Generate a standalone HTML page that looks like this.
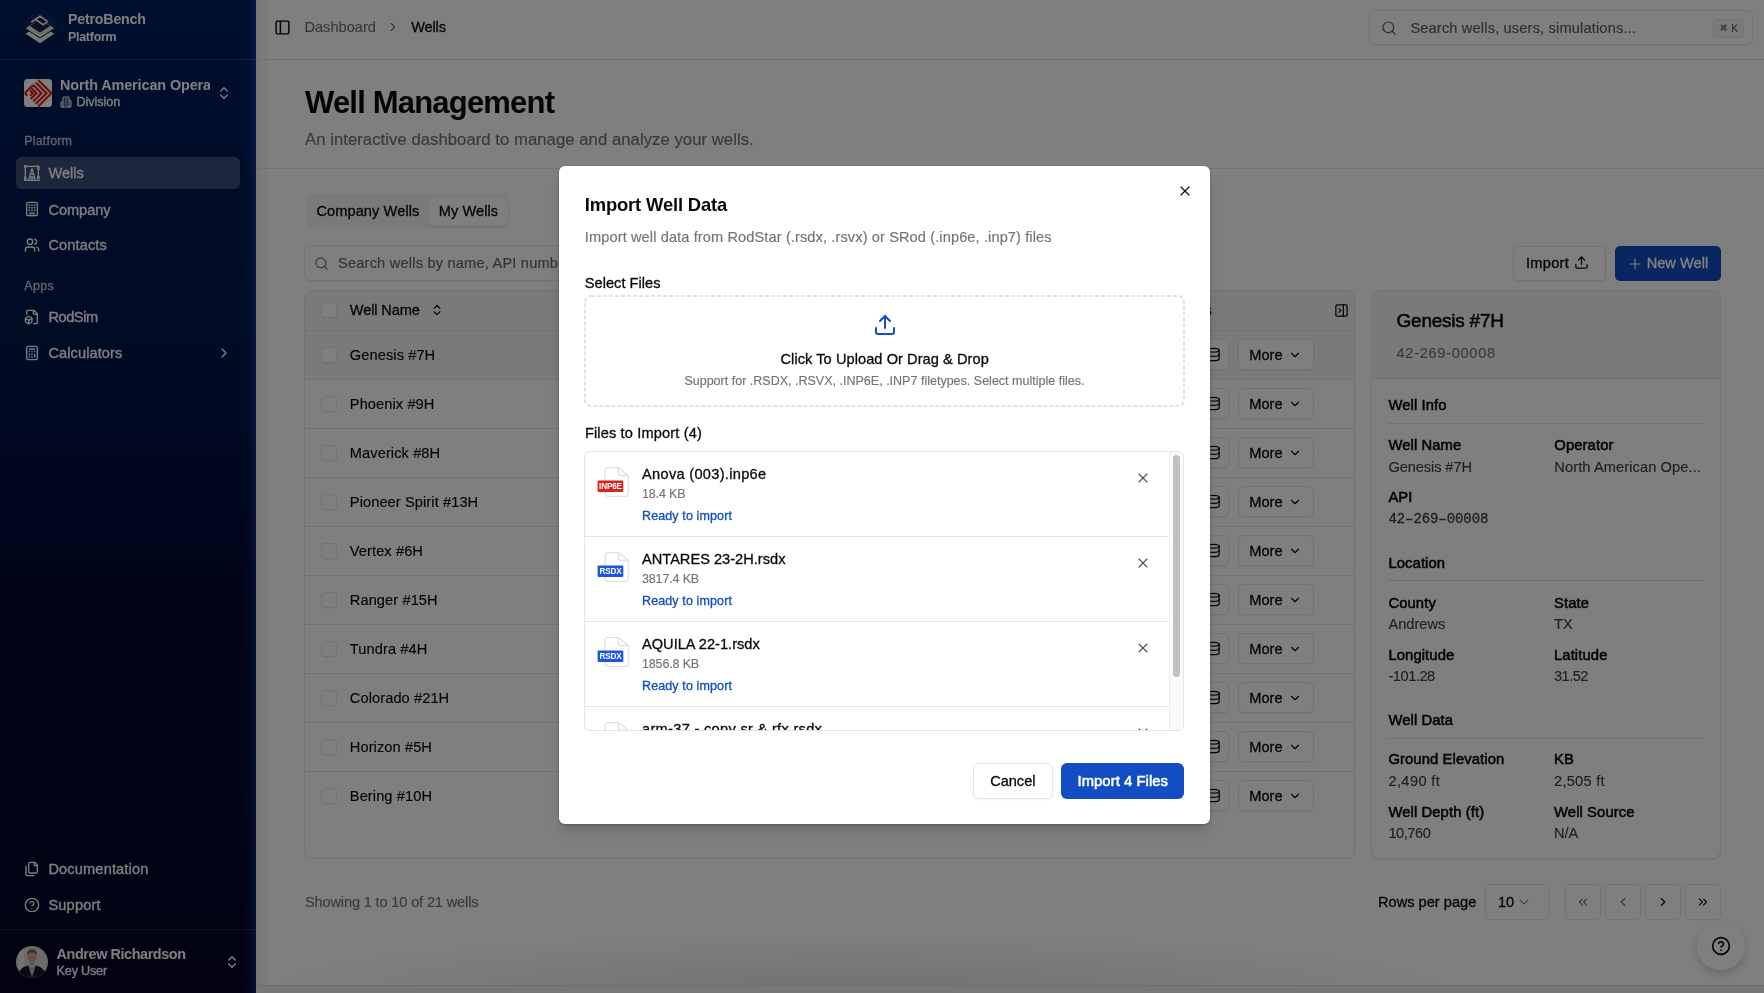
<!DOCTYPE html><html><head><meta charset="utf-8"><title>Import Well Data</title><style>*{box-sizing:content-box}
body{margin:0;width:1764px;height:993px;overflow:hidden;position:relative;background:#fff;font-family:'Liberation Sans',sans-serif}
.t{position:absolute;white-space:nowrap;line-height:1}
.a{position:absolute;display:block}
#ov{position:absolute;left:0;top:0;width:1764px;height:993px;background:rgba(0,0,0,.5)}
</style></head><body><div id="page" style="position:absolute;left:0;top:0;width:1764px;height:993px;overflow:hidden;will-change:transform"><div class="a" style="left:0px;top:0px;width:256px;height:993px;background:linear-gradient(180deg,#001e5c 0%,#001a54 12%,#001444 43%,#000c38 52%,#020830 60%,#02082c 80%,#040424 100%);"></div>
<div class="a" style="left:240px;top:0px;width:16px;height:993px;background:linear-gradient(90deg,rgba(30,70,190,0) 0%,rgba(30,70,190,0.10) 60%,rgba(40,90,220,0.35) 100%);"></div>
<div class="a" style="left:0px;top:59px;width:256px;height:1px;background:rgba(255,255,255,0.12);"></div>
<div class="a" style="left:0px;top:929px;width:256px;height:1px;background:rgba(255,255,255,0.12);"></div>
<svg class="a" style="left:18px;top:4px" width="44" height="46" viewBox="0 0 44 46"><defs><radialGradient id="lg" cx="50%" cy="50%" r="50%"><stop offset="0" stop-color="#3a5fae" stop-opacity=".6"/><stop offset=".6" stop-color="#2c4f9a" stop-opacity=".25"/><stop offset="1" stop-color="#2c4f9a" stop-opacity="0"/></radialGradient></defs><ellipse cx="22" cy="21" rx="19" ry="17" fill="url(#lg)"/><path d="M6.9 29.8 L22 20.2 L37 29.8 L22 39.8Z" fill="#f0f0f0" stroke="#06122e" stroke-width="0.9"/><path d="M6.9 24.2 L22 14.6 L37 24.2 L22 34Z" fill="#dedede" stroke="#06122e" stroke-width="0.9"/><path d="M12.8 22 L22 15.6 L31.2 22 L22 28.2Z" fill="#19233f" stroke="#06122e" stroke-width="0.8"/><path d="M17.6 15.2 L22 12.1 L29.6 17.6 L25.2 20.7 Z" fill="#0e1630" stroke="#ececec" stroke-width="1.7" stroke-linejoin="round"/><path d="M17.6 15.2 L13.9 17.8" stroke="#ececec" stroke-width="1.7" stroke-linecap="round"/></svg>
<div class="t" style="left:68.00px;top:12px;font-size:14.2px;font-weight:700;font-family:'Liberation Sans',sans-serif;color:#ffffff;letter-spacing:-0.189px;">PetroBench</div>
<div class="t" style="left:68.00px;top:31px;font-size:12.4px;font-weight:700;font-family:'Liberation Sans',sans-serif;color:#ffffff;letter-spacing:-0.243px;">Platform</div>
<svg class="a" style="left:24px;top:79px" width="28" height="28" viewBox="0 0 28 28"><rect x="0" y="0" width="28" height="28" rx="3.5" fill="#ffffff"/><g stroke="#e01a12" stroke-width="2.1" fill="none" stroke-linecap="butt" stroke-linejoin="miter"><path d="M14.2 0.9 L27.4 14.2 L14.2 27.5"/><path d="M11.7 3.4 L22.5 14.2 L11.7 25"/><path d="M9.2 5.9 L17.5 14.2 L9.2 22.5"/><path d="M0.8 14.2 L9.2 5.9"/><path d="M6.7 8.4 L12.5 14.2 L6.7 20"/><path d="M6.2 11.6 L8.8 14.2 L6.2 16.8"/><path d="M0.8 14.2 L3.3 16.7"/></g></svg>
<div class="a" style="left:60px;top:74px;width:150px;height:22px;overflow:hidden"><div class="t" style="left:0.00px;top:4px;font-size:14.4px;font-weight:700;font-family:'Liberation Sans',sans-serif;color:#ffffff;letter-spacing:-0.100px;">North American Operations</div></div>
<svg class="a" style="left:60px;top:96px;color:#ffffff;" width="12" height="12" viewBox="0 0 24 24" fill="none" stroke="currentColor" stroke-width="2.2" stroke-linecap="round" stroke-linejoin="round"><path d="M6 22V4a2 2 0 0 1 2-2h8a2 2 0 0 1 2 2v18Z"/><path d="M6 12H4a2 2 0 0 0-2 2v6a2 2 0 0 0 2 2h2"/><path d="M18 9h2a2 2 0 0 1 2 2v9a2 2 0 0 1-2 2h-2"/><path d="M10 6h4"/><path d="M10 10h4"/><path d="M10 14h4"/><path d="M10 18h4"/></svg>
<div class="t" style="left:76.50px;top:96px;font-size:12.6px;font-weight:400;font-family:'Liberation Sans',sans-serif;color:#ffffff;letter-spacing:-0.057px;-webkit-text-stroke:0.3px #ffffff;">Division</div>
<svg class="a" style="left:216px;top:85px;color:#ffffff;" width="16" height="16" viewBox="0 0 24 24" fill="none" stroke="currentColor" stroke-width="2" stroke-linecap="round" stroke-linejoin="round"><path d="m7 15 5 5 5-5"/><path d="m7 9 5-5 5 5"/></svg>
<div class="t" style="left:24.30px;top:135px;font-size:12.5px;font-weight:400;font-family:'Liberation Sans',sans-serif;color:#c4c8da;letter-spacing:0.164px;-webkit-text-stroke:0.3px #c4c8da;">Platform</div>
<div class="a" style="left:16px;top:157px;width:224px;height:32px;background:rgba(255,255,255,0.23);border-radius:6px;"></div>
<svg class="a" style="left:24px;top:165px" width="16" height="16" viewBox="0 0 16 16" fill="none" stroke="#fff" stroke-width="1.25" stroke-linecap="round"><path d="M0.6 15.3H15.5M1.3 1.4H13.6M1.3 1.4V11.8M14.4 4.8V11"/><circle cx="1.3" cy="1.4" r="0.8"/><ellipse cx="14.4" cy="2.8" rx="0.9" ry="1.9"/><ellipse cx="1.3" cy="13.3" rx="0.9" ry="1.4"/><ellipse cx="14.4" cy="12.5" rx="0.9" ry="1.4"/><path d="M8 3.3L4.6 15.3M8 3.3L11.4 15.3M6.4 9H9.6"/><circle cx="8" cy="12.8" r="1.3"/></svg>
<div class="t" style="left:48.40px;top:166px;font-size:14.6px;font-weight:400;font-family:'Liberation Sans',sans-serif;color:#ffffff;letter-spacing:0.000px;-webkit-text-stroke:0.3px #ffffff;">Wells</div>
<svg class="a" style="left:24px;top:201px;color:#ffffff;" width="16" height="16" viewBox="0 0 24 24" fill="none" stroke="currentColor" stroke-width="2" stroke-linecap="round" stroke-linejoin="round"><rect width="16" height="20" x="4" y="2" rx="2"/><path d="M9 22v-4h6v4"/><g fill="currentColor" stroke="none"><rect x="6.8" y="4.8" width="2.4" height="2.4"/><rect x="10.8" y="4.8" width="2.4" height="2.4"/><rect x="14.8" y="4.8" width="2.4" height="2.4"/><rect x="6.8" y="8.8" width="2.4" height="2.4"/><rect x="10.8" y="8.8" width="2.4" height="2.4"/><rect x="14.8" y="8.8" width="2.4" height="2.4"/><rect x="6.8" y="12.8" width="2.4" height="2.4"/><rect x="10.8" y="12.8" width="2.4" height="2.4"/><rect x="14.8" y="12.8" width="2.4" height="2.4"/></g></svg>
<div class="t" style="left:48.40px;top:203px;font-size:14.6px;font-weight:400;font-family:'Liberation Sans',sans-serif;color:#ffffff;letter-spacing:-0.033px;-webkit-text-stroke:0.3px #ffffff;">Company</div>
<svg class="a" style="left:24px;top:237px;color:#ffffff;" width="16" height="16" viewBox="0 0 24 24" fill="none" stroke="currentColor" stroke-width="2" stroke-linecap="round" stroke-linejoin="round"><path d="M16 21v-2a4 4 0 0 0-4-4H6a4 4 0 0 0-4 4v2"/><circle cx="9" cy="7" r="4"/><path d="M22 21v-2a4 4 0 0 0-3-3.87"/><path d="M16 3.13a4 4 0 0 1 0 7.75"/></svg>
<div class="t" style="left:48.40px;top:238px;font-size:14.6px;font-weight:400;font-family:'Liberation Sans',sans-serif;color:#ffffff;letter-spacing:0.114px;-webkit-text-stroke:0.3px #ffffff;">Contacts</div>
<div class="t" style="left:24.30px;top:280px;font-size:12.5px;font-weight:400;font-family:'Liberation Sans',sans-serif;color:#c4c8da;letter-spacing:0.300px;-webkit-text-stroke:0.3px #c4c8da;">Apps</div>
<svg class="a" style="left:24px;top:309px;color:#ffffff;" width="16" height="16" viewBox="0 0 24 24" fill="none" stroke="currentColor" stroke-width="2" stroke-linecap="round" stroke-linejoin="round"><path d="M14.5 22H18a2 2 0 0 0 2-2V7l-5-5H6a2 2 0 0 0-2 2v4"/><path d="M14 2v4a2 2 0 0 0 2 2h4"/><path d="M3 13.1a2 2 0 0 0-1 1.76v3.24a2 2 0 0 0 .97 1.78L6 21.7a2 2 0 0 0 2.03.01L11 19.9a2 2 0 0 0 1-1.76V14.9a2 2 0 0 0-.97-1.78L8 11.3a2 2 0 0 0-2.03-.01Z"/><path d="M7 17v5"/><path d="M11.7 14.2 7 17l-4.7-2.8"/></svg>
<div class="t" style="left:48.40px;top:310px;font-size:14.6px;font-weight:400;font-family:'Liberation Sans',sans-serif;color:#ffffff;letter-spacing:-0.430px;-webkit-text-stroke:0.3px #ffffff;">RodSim</div>
<svg class="a" style="left:24px;top:345px;color:#ffffff;" width="16" height="16" viewBox="0 0 24 24" fill="none" stroke="currentColor" stroke-width="2" stroke-linecap="round" stroke-linejoin="round"><rect width="16" height="20" x="4" y="2" rx="2"/><line x1="8" x2="16" y1="6" y2="6"/><line x1="16" x2="16" y1="14" y2="18"/><g fill="currentColor" stroke="none"><rect x="6.9" y="8.9" width="2.2" height="2.2"/><rect x="10.9" y="8.9" width="2.2" height="2.2"/><rect x="14.9" y="8.9" width="2.2" height="2.2"/><rect x="6.9" y="12.9" width="2.2" height="2.2"/><rect x="10.9" y="12.9" width="2.2" height="2.2"/><rect x="6.9" y="16.9" width="2.2" height="2.2"/><rect x="10.9" y="16.9" width="2.2" height="2.2"/></g></svg>
<div class="t" style="left:48.40px;top:346px;font-size:14.6px;font-weight:400;font-family:'Liberation Sans',sans-serif;color:#ffffff;letter-spacing:0.085px;-webkit-text-stroke:0.3px #ffffff;">Calculators</div>
<svg class="a" style="left:216px;top:345px;color:#ffffff;" width="16" height="16" viewBox="0 0 24 24" fill="none" stroke="currentColor" stroke-width="2" stroke-linecap="round" stroke-linejoin="round"><path d="m9 18 6-6-6-6"/></svg>
<svg class="a" style="left:24px;top:861px;color:#ffffff;" width="16" height="16" viewBox="0 0 24 24" fill="none" stroke="currentColor" stroke-width="2" stroke-linecap="round" stroke-linejoin="round"><path d="M20 7h-3a2 2 0 0 1-2-2V2"/><path d="M9 18a2 2 0 0 1-2-2V4a2 2 0 0 1 2-2h7l4 4v10a2 2 0 0 1-2 2Z"/><path d="M3 7.6v12.8A1.6 1.6 0 0 0 4.6 22h9.8"/></svg>
<div class="t" style="left:48.40px;top:862px;font-size:14.6px;font-weight:400;font-family:'Liberation Sans',sans-serif;color:#ffffff;letter-spacing:0.150px;-webkit-text-stroke:0.3px #ffffff;">Documentation</div>
<svg class="a" style="left:24px;top:897px;color:#ffffff;" width="16" height="16" viewBox="0 0 24 24" fill="none" stroke="currentColor" stroke-width="2" stroke-linecap="round" stroke-linejoin="round"><circle cx="12" cy="12" r="10"/><path d="M9.09 9a3 3 0 0 1 5.83 1c0 2-3 3-3 3"/><path d="M12 17h.01"/></svg>
<div class="t" style="left:48.40px;top:898px;font-size:14.6px;font-weight:400;font-family:'Liberation Sans',sans-serif;color:#ffffff;letter-spacing:0.192px;-webkit-text-stroke:0.3px #ffffff;">Support</div>
<svg class="a" style="left:16px;top:946px" width="32" height="32" viewBox="0 0 32 32"><defs><clipPath id="av"><circle cx="16" cy="16" r="16"/></clipPath></defs><g clip-path="url(#av)"><rect width="32" height="32" fill="#d6d6d6"/><rect x="3" y="0" width="5" height="32" fill="#e6e6e6"/><path d="M14 14 h4 v5 h-4z" fill="#c99a84"/><path d="M1 32 C2 24 7 20.5 12.5 19.5 L16 23 L19.5 19.5 C25 20.5 30 24 31 32Z" fill="#15171c"/><path d="M12.3 19.6 L16 32 L19.7 19.6 L16 22.5Z" fill="#9fb0c8"/><ellipse cx="16" cy="10.2" rx="4.7" ry="6" fill="#d4a48e"/><path d="M11.2 9 C11 5 13 3.6 16 3.6 C19 3.6 21.2 5 20.9 9 C20 6.8 18.3 6.2 16 6.2 C13.7 6.2 12 6.8 11.2 9Z" fill="#7a5a48"/></g></svg>
<div class="t" style="left:56.60px;top:947px;font-size:14.4px;font-weight:700;font-family:'Liberation Sans',sans-serif;color:#ffffff;letter-spacing:-0.406px;">Andrew Richardson</div>
<div class="t" style="left:56.60px;top:965px;font-size:12.6px;font-weight:400;font-family:'Liberation Sans',sans-serif;color:#ffffff;letter-spacing:-0.186px;-webkit-text-stroke:0.3px #ffffff;">Key User</div>
<svg class="a" style="left:224px;top:954px;color:#ffffff;" width="16" height="16" viewBox="0 0 24 24" fill="none" stroke="currentColor" stroke-width="2" stroke-linecap="round" stroke-linejoin="round"><path d="m7 15 5 5 5-5"/><path d="m7 9 5-5 5 5"/></svg>
<div class="a" style="left:256px;top:0px;width:1508px;height:993px;background:#ffffff;"></div>
<div class="a" style="left:256px;top:0px;width:14px;height:993px;background:linear-gradient(90deg,rgba(40,70,160,0.10),rgba(40,70,160,0));"></div>
<div class="a" style="left:256px;top:59px;width:1508px;height:1px;background:#e5e5e5;"></div>
<div class="a" style="left:256px;top:168px;width:1508px;height:1px;background:#e5e5e5;"></div>
<svg class="a" style="left:274px;top:19px;color:#0a0a0a;" width="17" height="17" viewBox="0 0 24 24" fill="none" stroke="currentColor" stroke-width="2.1" stroke-linecap="round" stroke-linejoin="round"><rect width="18" height="18" x="3" y="3" rx="2"/><path d="M9 3v18"/></svg>
<div class="t" style="left:304.40px;top:20px;font-size:14.6px;font-weight:400;font-family:'Liberation Sans',sans-serif;color:#737373;letter-spacing:0.012px;-webkit-text-stroke:0.15px #737373;">Dashboard</div>
<svg class="a" style="left:386px;top:20px;color:#737373;" width="14" height="14" viewBox="0 0 24 24" fill="none" stroke="currentColor" stroke-width="2" stroke-linecap="round" stroke-linejoin="round"><path d="m9 18 6-6-6-6"/></svg>
<div class="t" style="left:411.20px;top:20px;font-size:14.6px;font-weight:400;font-family:'Liberation Sans',sans-serif;color:#0a0a0a;letter-spacing:-0.150px;-webkit-text-stroke:0.3px #0a0a0a;">Wells</div>
<div class="a" style="left:1369px;top:10px;width:384px;height:35px;border:1px solid #e5e5e5;border-radius:6px;box-sizing:border-box;background:#fff;box-shadow:0 1px 2px rgba(0,0,0,.05);"></div>
<svg class="a" style="left:1381px;top:20px;color:#555;" width="16" height="16" viewBox="0 0 24 24" fill="none" stroke="currentColor" stroke-width="1.8" stroke-linecap="round" stroke-linejoin="round"><circle cx="11" cy="11" r="8"/><path d="m21 21-4.3-4.3"/></svg>
<div class="t" style="left:1410.40px;top:21px;font-size:14.6px;font-weight:400;font-family:'Liberation Sans',sans-serif;color:#5c5c5c;letter-spacing:0.168px;-webkit-text-stroke:0.15px #5c5c5c;">Search wells, users, simulations...</div>
<div class="a" style="left:1713px;top:19px;width:31px;height:19px;border:1px solid #e5e5e5;border-radius:4px;box-sizing:border-box;background:#f5f5f5;"></div>
<svg class="a" style="left:1719.6px;top:24px;color:#666;" width="7.4" height="7.4" viewBox="0 0 24 24" fill="none" stroke="currentColor" stroke-width="3" stroke-linecap="round" stroke-linejoin="round"><path d="M15 6v12a3 3 0 1 0 3-3H6a3 3 0 1 0 3 3V6a3 3 0 1 0-3 3h12a3 3 0 1 0-3-3"/></svg>
<div class="t" style="left:1731.20px;top:24px;font-size:10.2px;font-weight:400;font-family:'Liberation Sans',sans-serif;color:#666666;letter-spacing:0.000px;-webkit-text-stroke:0.15px #666666;">K</div>
<div class="t" style="left:305.00px;top:87px;font-size:31px;font-weight:700;font-family:'Liberation Sans',sans-serif;color:#0a0a0a;letter-spacing:-0.804px;">Well Management</div>
<div class="t" style="left:305.00px;top:132px;font-size:16.7px;font-weight:400;font-family:'Liberation Sans',sans-serif;color:#737373;letter-spacing:0.044px;-webkit-text-stroke:0.15px #737373;">An interactive dashboard to manage and analyze your wells.</div>
<div class="a" style="left:305px;top:194px;width:204px;height:34px;background:#f5f5f5;border-radius:8px;"></div>
<div class="a" style="left:429px;top:197px;width:79px;height:29px;background:#fff;border-radius:6px;box-shadow:0 1px 3px rgba(0,0,0,.12);"></div>
<div class="t" style="left:316.40px;top:204px;font-size:14.6px;font-weight:400;font-family:'Liberation Sans',sans-serif;color:#0a0a0a;letter-spacing:0.087px;-webkit-text-stroke:0.3px #0a0a0a;">Company Wells</div>
<div class="t" style="left:438.70px;top:204px;font-size:14.6px;font-weight:400;font-family:'Liberation Sans',sans-serif;color:#0a0a0a;letter-spacing:0.079px;-webkit-text-stroke:0.3px #0a0a0a;">My Wells</div>
<div class="a" style="left:304px;top:245px;width:456px;height:36px;border:1px solid #e5e5e5;border-radius:6px;box-sizing:border-box;background:#fff;box-shadow:0 1px 2px rgba(0,0,0,.05);"></div>
<svg class="a" style="left:314px;top:256px;color:#737373;" width="15" height="15" viewBox="0 0 24 24" fill="none" stroke="currentColor" stroke-width="2" stroke-linecap="round" stroke-linejoin="round"><circle cx="11" cy="11" r="8"/><path d="m21 21-4.3-4.3"/></svg>
<div class="t" style="left:338.00px;top:256px;font-size:14.6px;font-weight:400;font-family:'Liberation Sans',sans-serif;color:#666666;letter-spacing:0.200px;-webkit-text-stroke:0.15px #666666;">Search wells by name, API number...</div>
<div class="a" style="left:1513px;top:246px;width:93px;height:35px;border:1px solid #e5e5e5;border-radius:5px;box-sizing:border-box;background:#fff;box-shadow:0 1px 2px rgba(0,0,0,.05);"></div>
<div class="t" style="left:1526.00px;top:256px;font-size:14.6px;font-weight:400;font-family:'Liberation Sans',sans-serif;color:#0a0a0a;letter-spacing:0.280px;-webkit-text-stroke:0.3px #0a0a0a;">Import</div>
<svg class="a" style="left:1574px;top:255px;color:#0a0a0a;" width="15" height="15" viewBox="0 0 24 24" fill="none" stroke="currentColor" stroke-width="2" stroke-linecap="round" stroke-linejoin="round"><path d="M21 15v4a2 2 0 0 1-2 2H5a2 2 0 0 1-2-2v-4"/><polyline points="17 8 12 3 7 8"/><line x1="12" x2="12" y1="3" y2="15"/></svg>
<div class="a" style="left:1615px;top:246px;width:106px;height:35px;background:#124dc2;border-radius:5px;"></div>
<svg class="a" style="left:1626.5px;top:255.5px;color:#fff;" width="16" height="16" viewBox="0 0 24 24" fill="none" stroke="currentColor" stroke-width="1.7" stroke-linecap="round" stroke-linejoin="round"><path d="M5 12h14"/><path d="M12 5v14"/></svg>
<div class="t" style="left:1646.70px;top:256px;font-size:14.6px;font-weight:400;font-family:'Liberation Sans',sans-serif;color:#fff;letter-spacing:0.014px;-webkit-text-stroke:0.3px #fff;">New Well</div>
<div class="a" style="left:304px;top:290px;width:1051px;height:569px;border:1px solid #e5e5e5;border-radius:8px;box-sizing:border-box;overflow:hidden;"></div>
<div class="a" style="left:305px;top:291px;width:1049px;height:39px;background:#f5f5f5;border-radius:7px 7px 0 0;"></div>
<div class="a" style="left:305px;top:330px;width:1049px;height:49px;background:#f5f5f5;"></div>
<div class="a" style="left:305px;top:330px;width:1049px;height:1px;background:#e5e5e5;"></div>
<div class="a" style="left:305px;top:379px;width:1049px;height:1px;background:#e5e5e5;"></div>
<div class="a" style="left:305px;top:428px;width:1049px;height:1px;background:#e5e5e5;"></div>
<div class="a" style="left:305px;top:477px;width:1049px;height:1px;background:#e5e5e5;"></div>
<div class="a" style="left:305px;top:526px;width:1049px;height:1px;background:#e5e5e5;"></div>
<div class="a" style="left:305px;top:575px;width:1049px;height:1px;background:#e5e5e5;"></div>
<div class="a" style="left:305px;top:624px;width:1049px;height:1px;background:#e5e5e5;"></div>
<div class="a" style="left:305px;top:673px;width:1049px;height:1px;background:#e5e5e5;"></div>
<div class="a" style="left:305px;top:722px;width:1049px;height:1px;background:#e5e5e5;"></div>
<div class="a" style="left:305px;top:771px;width:1049px;height:1px;background:#e5e5e5;"></div>
<div class="a" style="left:321px;top:302px;width:16px;height:16px;border:1px solid #e5e5e5;border-radius:4px;box-sizing:border-box;background:#fff;box-shadow:0 1px 2px rgba(0,0,0,.05);"></div>
<div class="t" style="left:349.80px;top:303px;font-size:14.6px;font-weight:400;font-family:'Liberation Sans',sans-serif;color:#0a0a0a;letter-spacing:-0.137px;-webkit-text-stroke:0.3px #0a0a0a;">Well Name</div>
<svg class="a" style="left:430px;top:303px;color:#0a0a0a;" width="14" height="14" viewBox="0 0 24 24" fill="none" stroke="currentColor" stroke-width="2" stroke-linecap="round" stroke-linejoin="round"><path d="m7 15 5 5 5-5"/><path d="m7 9 5-5 5 5"/></svg>
<div class="t" style="left:1164.00px;top:303px;font-size:14.6px;font-weight:400;font-family:'Liberation Sans',sans-serif;color:#0a0a0a;letter-spacing:0.000px;-webkit-text-stroke:0.3px #0a0a0a;">Actions</div>
<svg class="a" style="left:1334px;top:303px;color:#0a0a0a;" width="15" height="15" viewBox="0 0 24 24" fill="none" stroke="currentColor" stroke-width="2" stroke-linecap="round" stroke-linejoin="round"><rect width="18" height="18" x="3" y="3" rx="2"/><path d="M15 3v18"/><path d="m8 9 3 3-3 3"/></svg>
<div class="a" style="left:321px;top:347px;width:16px;height:16px;border:1px solid #e5e5e5;border-radius:4px;box-sizing:border-box;background:#fff;box-shadow:0 1px 2px rgba(0,0,0,.05);"></div>
<div class="t" style="left:349.80px;top:348px;font-size:14.6px;font-weight:400;font-family:'Liberation Sans',sans-serif;color:#0a0a0a;letter-spacing:0.100px;-webkit-text-stroke:0.15px #0a0a0a;">Genesis #7H</div>
<div class="a" style="left:1198px;top:339px;width:31px;height:31px;border:1px solid #e5e5e5;border-radius:5px;box-sizing:border-box;background:#fff;box-shadow:0 1px 2px rgba(0,0,0,.05);"></div>
<svg class="a" style="left:1206px;top:347px;color:#0a0a0a;" width="15" height="15" viewBox="0 0 24 24" fill="none" stroke="currentColor" stroke-width="2" stroke-linecap="round" stroke-linejoin="round"><ellipse cx="12" cy="5" rx="9" ry="3"/><path d="M3 5V19A9 3 0 0 0 21 19V5"/><path d="M3 12A9 3 0 0 0 21 12"/></svg>
<div class="a" style="left:1238px;top:339px;width:76px;height:31px;border:1px solid #e5e5e5;border-radius:5px;box-sizing:border-box;background:#fff;box-shadow:0 1px 2px rgba(0,0,0,.05);"></div>
<div class="t" style="left:1249.30px;top:348px;font-size:14.6px;font-weight:400;font-family:'Liberation Sans',sans-serif;color:#0a0a0a;letter-spacing:0.017px;-webkit-text-stroke:0.3px #0a0a0a;">More</div>
<svg class="a" style="left:1288px;top:348px;color:#0a0a0a;" width="14" height="14" viewBox="0 0 24 24" fill="none" stroke="currentColor" stroke-width="2" stroke-linecap="round" stroke-linejoin="round"><path d="m6 9 6 6 6-6"/></svg>
<div class="a" style="left:321px;top:396px;width:16px;height:16px;border:1px solid #e5e5e5;border-radius:4px;box-sizing:border-box;background:#fff;box-shadow:0 1px 2px rgba(0,0,0,.05);"></div>
<div class="t" style="left:349.80px;top:397px;font-size:14.6px;font-weight:400;font-family:'Liberation Sans',sans-serif;color:#0a0a0a;letter-spacing:0.100px;-webkit-text-stroke:0.15px #0a0a0a;">Phoenix #9H</div>
<div class="a" style="left:1198px;top:388px;width:31px;height:31px;border:1px solid #e5e5e5;border-radius:5px;box-sizing:border-box;background:#fff;box-shadow:0 1px 2px rgba(0,0,0,.05);"></div>
<svg class="a" style="left:1206px;top:396px;color:#0a0a0a;" width="15" height="15" viewBox="0 0 24 24" fill="none" stroke="currentColor" stroke-width="2" stroke-linecap="round" stroke-linejoin="round"><ellipse cx="12" cy="5" rx="9" ry="3"/><path d="M3 5V19A9 3 0 0 0 21 19V5"/><path d="M3 12A9 3 0 0 0 21 12"/></svg>
<div class="a" style="left:1238px;top:388px;width:76px;height:31px;border:1px solid #e5e5e5;border-radius:5px;box-sizing:border-box;background:#fff;box-shadow:0 1px 2px rgba(0,0,0,.05);"></div>
<div class="t" style="left:1249.30px;top:397px;font-size:14.6px;font-weight:400;font-family:'Liberation Sans',sans-serif;color:#0a0a0a;letter-spacing:0.017px;-webkit-text-stroke:0.3px #0a0a0a;">More</div>
<svg class="a" style="left:1288px;top:397px;color:#0a0a0a;" width="14" height="14" viewBox="0 0 24 24" fill="none" stroke="currentColor" stroke-width="2" stroke-linecap="round" stroke-linejoin="round"><path d="m6 9 6 6 6-6"/></svg>
<div class="a" style="left:321px;top:445px;width:16px;height:16px;border:1px solid #e5e5e5;border-radius:4px;box-sizing:border-box;background:#fff;box-shadow:0 1px 2px rgba(0,0,0,.05);"></div>
<div class="t" style="left:349.80px;top:446px;font-size:14.6px;font-weight:400;font-family:'Liberation Sans',sans-serif;color:#0a0a0a;letter-spacing:0.100px;-webkit-text-stroke:0.15px #0a0a0a;">Maverick #8H</div>
<div class="a" style="left:1198px;top:437px;width:31px;height:31px;border:1px solid #e5e5e5;border-radius:5px;box-sizing:border-box;background:#fff;box-shadow:0 1px 2px rgba(0,0,0,.05);"></div>
<svg class="a" style="left:1206px;top:445px;color:#0a0a0a;" width="15" height="15" viewBox="0 0 24 24" fill="none" stroke="currentColor" stroke-width="2" stroke-linecap="round" stroke-linejoin="round"><ellipse cx="12" cy="5" rx="9" ry="3"/><path d="M3 5V19A9 3 0 0 0 21 19V5"/><path d="M3 12A9 3 0 0 0 21 12"/></svg>
<div class="a" style="left:1238px;top:437px;width:76px;height:31px;border:1px solid #e5e5e5;border-radius:5px;box-sizing:border-box;background:#fff;box-shadow:0 1px 2px rgba(0,0,0,.05);"></div>
<div class="t" style="left:1249.30px;top:446px;font-size:14.6px;font-weight:400;font-family:'Liberation Sans',sans-serif;color:#0a0a0a;letter-spacing:0.017px;-webkit-text-stroke:0.3px #0a0a0a;">More</div>
<svg class="a" style="left:1288px;top:446px;color:#0a0a0a;" width="14" height="14" viewBox="0 0 24 24" fill="none" stroke="currentColor" stroke-width="2" stroke-linecap="round" stroke-linejoin="round"><path d="m6 9 6 6 6-6"/></svg>
<div class="a" style="left:321px;top:494px;width:16px;height:16px;border:1px solid #e5e5e5;border-radius:4px;box-sizing:border-box;background:#fff;box-shadow:0 1px 2px rgba(0,0,0,.05);"></div>
<div class="t" style="left:349.80px;top:495px;font-size:14.6px;font-weight:400;font-family:'Liberation Sans',sans-serif;color:#0a0a0a;letter-spacing:0.100px;-webkit-text-stroke:0.15px #0a0a0a;">Pioneer Spirit #13H</div>
<div class="a" style="left:1198px;top:486px;width:31px;height:31px;border:1px solid #e5e5e5;border-radius:5px;box-sizing:border-box;background:#fff;box-shadow:0 1px 2px rgba(0,0,0,.05);"></div>
<svg class="a" style="left:1206px;top:494px;color:#0a0a0a;" width="15" height="15" viewBox="0 0 24 24" fill="none" stroke="currentColor" stroke-width="2" stroke-linecap="round" stroke-linejoin="round"><ellipse cx="12" cy="5" rx="9" ry="3"/><path d="M3 5V19A9 3 0 0 0 21 19V5"/><path d="M3 12A9 3 0 0 0 21 12"/></svg>
<div class="a" style="left:1238px;top:486px;width:76px;height:31px;border:1px solid #e5e5e5;border-radius:5px;box-sizing:border-box;background:#fff;box-shadow:0 1px 2px rgba(0,0,0,.05);"></div>
<div class="t" style="left:1249.30px;top:495px;font-size:14.6px;font-weight:400;font-family:'Liberation Sans',sans-serif;color:#0a0a0a;letter-spacing:0.017px;-webkit-text-stroke:0.3px #0a0a0a;">More</div>
<svg class="a" style="left:1288px;top:495px;color:#0a0a0a;" width="14" height="14" viewBox="0 0 24 24" fill="none" stroke="currentColor" stroke-width="2" stroke-linecap="round" stroke-linejoin="round"><path d="m6 9 6 6 6-6"/></svg>
<div class="a" style="left:321px;top:543px;width:16px;height:16px;border:1px solid #e5e5e5;border-radius:4px;box-sizing:border-box;background:#fff;box-shadow:0 1px 2px rgba(0,0,0,.05);"></div>
<div class="t" style="left:349.80px;top:544px;font-size:14.6px;font-weight:400;font-family:'Liberation Sans',sans-serif;color:#0a0a0a;letter-spacing:0.100px;-webkit-text-stroke:0.15px #0a0a0a;">Vertex #6H</div>
<div class="a" style="left:1198px;top:535px;width:31px;height:31px;border:1px solid #e5e5e5;border-radius:5px;box-sizing:border-box;background:#fff;box-shadow:0 1px 2px rgba(0,0,0,.05);"></div>
<svg class="a" style="left:1206px;top:543px;color:#0a0a0a;" width="15" height="15" viewBox="0 0 24 24" fill="none" stroke="currentColor" stroke-width="2" stroke-linecap="round" stroke-linejoin="round"><ellipse cx="12" cy="5" rx="9" ry="3"/><path d="M3 5V19A9 3 0 0 0 21 19V5"/><path d="M3 12A9 3 0 0 0 21 12"/></svg>
<div class="a" style="left:1238px;top:535px;width:76px;height:31px;border:1px solid #e5e5e5;border-radius:5px;box-sizing:border-box;background:#fff;box-shadow:0 1px 2px rgba(0,0,0,.05);"></div>
<div class="t" style="left:1249.30px;top:544px;font-size:14.6px;font-weight:400;font-family:'Liberation Sans',sans-serif;color:#0a0a0a;letter-spacing:0.017px;-webkit-text-stroke:0.3px #0a0a0a;">More</div>
<svg class="a" style="left:1288px;top:544px;color:#0a0a0a;" width="14" height="14" viewBox="0 0 24 24" fill="none" stroke="currentColor" stroke-width="2" stroke-linecap="round" stroke-linejoin="round"><path d="m6 9 6 6 6-6"/></svg>
<div class="a" style="left:321px;top:592px;width:16px;height:16px;border:1px solid #e5e5e5;border-radius:4px;box-sizing:border-box;background:#fff;box-shadow:0 1px 2px rgba(0,0,0,.05);"></div>
<div class="t" style="left:349.80px;top:593px;font-size:14.6px;font-weight:400;font-family:'Liberation Sans',sans-serif;color:#0a0a0a;letter-spacing:0.100px;-webkit-text-stroke:0.15px #0a0a0a;">Ranger #15H</div>
<div class="a" style="left:1198px;top:584px;width:31px;height:31px;border:1px solid #e5e5e5;border-radius:5px;box-sizing:border-box;background:#fff;box-shadow:0 1px 2px rgba(0,0,0,.05);"></div>
<svg class="a" style="left:1206px;top:592px;color:#0a0a0a;" width="15" height="15" viewBox="0 0 24 24" fill="none" stroke="currentColor" stroke-width="2" stroke-linecap="round" stroke-linejoin="round"><ellipse cx="12" cy="5" rx="9" ry="3"/><path d="M3 5V19A9 3 0 0 0 21 19V5"/><path d="M3 12A9 3 0 0 0 21 12"/></svg>
<div class="a" style="left:1238px;top:584px;width:76px;height:31px;border:1px solid #e5e5e5;border-radius:5px;box-sizing:border-box;background:#fff;box-shadow:0 1px 2px rgba(0,0,0,.05);"></div>
<div class="t" style="left:1249.30px;top:593px;font-size:14.6px;font-weight:400;font-family:'Liberation Sans',sans-serif;color:#0a0a0a;letter-spacing:0.017px;-webkit-text-stroke:0.3px #0a0a0a;">More</div>
<svg class="a" style="left:1288px;top:593px;color:#0a0a0a;" width="14" height="14" viewBox="0 0 24 24" fill="none" stroke="currentColor" stroke-width="2" stroke-linecap="round" stroke-linejoin="round"><path d="m6 9 6 6 6-6"/></svg>
<div class="a" style="left:321px;top:641px;width:16px;height:16px;border:1px solid #e5e5e5;border-radius:4px;box-sizing:border-box;background:#fff;box-shadow:0 1px 2px rgba(0,0,0,.05);"></div>
<div class="t" style="left:349.80px;top:642px;font-size:14.6px;font-weight:400;font-family:'Liberation Sans',sans-serif;color:#0a0a0a;letter-spacing:0.100px;-webkit-text-stroke:0.15px #0a0a0a;">Tundra #4H</div>
<div class="a" style="left:1198px;top:633px;width:31px;height:31px;border:1px solid #e5e5e5;border-radius:5px;box-sizing:border-box;background:#fff;box-shadow:0 1px 2px rgba(0,0,0,.05);"></div>
<svg class="a" style="left:1206px;top:641px;color:#0a0a0a;" width="15" height="15" viewBox="0 0 24 24" fill="none" stroke="currentColor" stroke-width="2" stroke-linecap="round" stroke-linejoin="round"><ellipse cx="12" cy="5" rx="9" ry="3"/><path d="M3 5V19A9 3 0 0 0 21 19V5"/><path d="M3 12A9 3 0 0 0 21 12"/></svg>
<div class="a" style="left:1238px;top:633px;width:76px;height:31px;border:1px solid #e5e5e5;border-radius:5px;box-sizing:border-box;background:#fff;box-shadow:0 1px 2px rgba(0,0,0,.05);"></div>
<div class="t" style="left:1249.30px;top:642px;font-size:14.6px;font-weight:400;font-family:'Liberation Sans',sans-serif;color:#0a0a0a;letter-spacing:0.017px;-webkit-text-stroke:0.3px #0a0a0a;">More</div>
<svg class="a" style="left:1288px;top:642px;color:#0a0a0a;" width="14" height="14" viewBox="0 0 24 24" fill="none" stroke="currentColor" stroke-width="2" stroke-linecap="round" stroke-linejoin="round"><path d="m6 9 6 6 6-6"/></svg>
<div class="a" style="left:321px;top:690px;width:16px;height:16px;border:1px solid #e5e5e5;border-radius:4px;box-sizing:border-box;background:#fff;box-shadow:0 1px 2px rgba(0,0,0,.05);"></div>
<div class="t" style="left:349.80px;top:691px;font-size:14.6px;font-weight:400;font-family:'Liberation Sans',sans-serif;color:#0a0a0a;letter-spacing:0.100px;-webkit-text-stroke:0.15px #0a0a0a;">Colorado #21H</div>
<div class="a" style="left:1198px;top:682px;width:31px;height:31px;border:1px solid #e5e5e5;border-radius:5px;box-sizing:border-box;background:#fff;box-shadow:0 1px 2px rgba(0,0,0,.05);"></div>
<svg class="a" style="left:1206px;top:690px;color:#0a0a0a;" width="15" height="15" viewBox="0 0 24 24" fill="none" stroke="currentColor" stroke-width="2" stroke-linecap="round" stroke-linejoin="round"><ellipse cx="12" cy="5" rx="9" ry="3"/><path d="M3 5V19A9 3 0 0 0 21 19V5"/><path d="M3 12A9 3 0 0 0 21 12"/></svg>
<div class="a" style="left:1238px;top:682px;width:76px;height:31px;border:1px solid #e5e5e5;border-radius:5px;box-sizing:border-box;background:#fff;box-shadow:0 1px 2px rgba(0,0,0,.05);"></div>
<div class="t" style="left:1249.30px;top:691px;font-size:14.6px;font-weight:400;font-family:'Liberation Sans',sans-serif;color:#0a0a0a;letter-spacing:0.017px;-webkit-text-stroke:0.3px #0a0a0a;">More</div>
<svg class="a" style="left:1288px;top:691px;color:#0a0a0a;" width="14" height="14" viewBox="0 0 24 24" fill="none" stroke="currentColor" stroke-width="2" stroke-linecap="round" stroke-linejoin="round"><path d="m6 9 6 6 6-6"/></svg>
<div class="a" style="left:321px;top:739px;width:16px;height:16px;border:1px solid #e5e5e5;border-radius:4px;box-sizing:border-box;background:#fff;box-shadow:0 1px 2px rgba(0,0,0,.05);"></div>
<div class="t" style="left:349.80px;top:740px;font-size:14.6px;font-weight:400;font-family:'Liberation Sans',sans-serif;color:#0a0a0a;letter-spacing:0.100px;-webkit-text-stroke:0.15px #0a0a0a;">Horizon #5H</div>
<div class="a" style="left:1198px;top:731px;width:31px;height:31px;border:1px solid #e5e5e5;border-radius:5px;box-sizing:border-box;background:#fff;box-shadow:0 1px 2px rgba(0,0,0,.05);"></div>
<svg class="a" style="left:1206px;top:739px;color:#0a0a0a;" width="15" height="15" viewBox="0 0 24 24" fill="none" stroke="currentColor" stroke-width="2" stroke-linecap="round" stroke-linejoin="round"><ellipse cx="12" cy="5" rx="9" ry="3"/><path d="M3 5V19A9 3 0 0 0 21 19V5"/><path d="M3 12A9 3 0 0 0 21 12"/></svg>
<div class="a" style="left:1238px;top:731px;width:76px;height:31px;border:1px solid #e5e5e5;border-radius:5px;box-sizing:border-box;background:#fff;box-shadow:0 1px 2px rgba(0,0,0,.05);"></div>
<div class="t" style="left:1249.30px;top:740px;font-size:14.6px;font-weight:400;font-family:'Liberation Sans',sans-serif;color:#0a0a0a;letter-spacing:0.017px;-webkit-text-stroke:0.3px #0a0a0a;">More</div>
<svg class="a" style="left:1288px;top:740px;color:#0a0a0a;" width="14" height="14" viewBox="0 0 24 24" fill="none" stroke="currentColor" stroke-width="2" stroke-linecap="round" stroke-linejoin="round"><path d="m6 9 6 6 6-6"/></svg>
<div class="a" style="left:321px;top:788px;width:16px;height:16px;border:1px solid #e5e5e5;border-radius:4px;box-sizing:border-box;background:#fff;box-shadow:0 1px 2px rgba(0,0,0,.05);"></div>
<div class="t" style="left:349.80px;top:789px;font-size:14.6px;font-weight:400;font-family:'Liberation Sans',sans-serif;color:#0a0a0a;letter-spacing:0.100px;-webkit-text-stroke:0.15px #0a0a0a;">Bering #10H</div>
<div class="a" style="left:1198px;top:780px;width:31px;height:31px;border:1px solid #e5e5e5;border-radius:5px;box-sizing:border-box;background:#fff;box-shadow:0 1px 2px rgba(0,0,0,.05);"></div>
<svg class="a" style="left:1206px;top:788px;color:#0a0a0a;" width="15" height="15" viewBox="0 0 24 24" fill="none" stroke="currentColor" stroke-width="2" stroke-linecap="round" stroke-linejoin="round"><ellipse cx="12" cy="5" rx="9" ry="3"/><path d="M3 5V19A9 3 0 0 0 21 19V5"/><path d="M3 12A9 3 0 0 0 21 12"/></svg>
<div class="a" style="left:1238px;top:780px;width:76px;height:31px;border:1px solid #e5e5e5;border-radius:5px;box-sizing:border-box;background:#fff;box-shadow:0 1px 2px rgba(0,0,0,.05);"></div>
<div class="t" style="left:1249.30px;top:789px;font-size:14.6px;font-weight:400;font-family:'Liberation Sans',sans-serif;color:#0a0a0a;letter-spacing:0.017px;-webkit-text-stroke:0.3px #0a0a0a;">More</div>
<svg class="a" style="left:1288px;top:789px;color:#0a0a0a;" width="14" height="14" viewBox="0 0 24 24" fill="none" stroke="currentColor" stroke-width="2" stroke-linecap="round" stroke-linejoin="round"><path d="m6 9 6 6 6-6"/></svg>
<div class="t" style="left:305.00px;top:895px;font-size:14.6px;font-weight:400;font-family:'Liberation Sans',sans-serif;color:#737373;letter-spacing:-0.160px;-webkit-text-stroke:0.15px #737373;">Showing 1 to 10 of 21 wells</div>
<div class="a" style="left:1371px;top:290px;width:350px;height:569px;border:1px solid #e5e5e5;border-radius:8px;box-sizing:border-box;background:#fff;box-shadow:0 1px 2px rgba(0,0,0,.05);"></div>
<div class="a" style="left:1372px;top:291px;width:348px;height:88px;background:#f5f5f5;border-radius:7px 7px 0 0;"></div>
<div class="a" style="left:1372px;top:378px;width:348px;height:1px;background:#e5e5e5;"></div>
<div class="t" style="left:1396.50px;top:311px;font-size:19px;font-weight:400;font-family:'Liberation Sans',sans-serif;color:#0a0a0a;letter-spacing:-0.235px;-webkit-text-stroke:0.55px #0a0a0a;">Genesis #7H</div>
<div class="t" style="left:1396.50px;top:346px;font-size:14.6px;font-weight:400;font-family:'Liberation Sans',sans-serif;color:#737373;letter-spacing:0.700px;-webkit-text-stroke:0.15px #737373;">42-269-00008</div>
<div class="t" style="left:1388.40px;top:398px;font-size:14.8px;font-weight:400;font-family:'Liberation Sans',sans-serif;color:#0a0a0a;letter-spacing:0.100px;-webkit-text-stroke:0.55px #0a0a0a;">Well Info</div>
<div class="a" style="left:1388px;top:423px;width:316px;height:1px;background:#e5e5e5;"></div>
<div class="t" style="left:1388.40px;top:438px;font-size:14.8px;font-weight:400;font-family:'Liberation Sans',sans-serif;color:#0a0a0a;letter-spacing:0.100px;-webkit-text-stroke:0.55px #0a0a0a;">Well Name</div>
<div class="t" style="left:1388.40px;top:460px;font-size:14.6px;font-weight:400;font-family:'Liberation Sans',sans-serif;color:#404040;letter-spacing:-0.080px;-webkit-text-stroke:0.15px #404040;">Genesis #7H</div>
<div class="t" style="left:1554.30px;top:438px;font-size:14.8px;font-weight:400;font-family:'Liberation Sans',sans-serif;color:#0a0a0a;letter-spacing:0.100px;-webkit-text-stroke:0.55px #0a0a0a;">Operator</div>
<div class="t" style="left:1554.30px;top:460px;font-size:14.6px;font-weight:400;font-family:'Liberation Sans',sans-serif;color:#404040;letter-spacing:0.113px;-webkit-text-stroke:0.15px #404040;">North American Ope...</div>
<div class="t" style="left:1388.40px;top:490px;font-size:14.8px;font-weight:400;font-family:'Liberation Sans',sans-serif;color:#0a0a0a;letter-spacing:0.100px;-webkit-text-stroke:0.55px #0a0a0a;">API</div>
<div class="t" style="left:1388.40px;top:512px;font-size:14px;font-weight:400;font-family:'Liberation Mono',monospace;color:#404040;letter-spacing:-0.073px;-webkit-text-stroke:0.3px #404040;">42–269–00008</div>
<div class="t" style="left:1388.40px;top:556px;font-size:14.8px;font-weight:400;font-family:'Liberation Sans',sans-serif;color:#0a0a0a;letter-spacing:0.100px;-webkit-text-stroke:0.55px #0a0a0a;">Location</div>
<div class="a" style="left:1388px;top:580px;width:316px;height:1px;background:#e5e5e5;"></div>
<div class="t" style="left:1388.40px;top:596px;font-size:14.8px;font-weight:400;font-family:'Liberation Sans',sans-serif;color:#0a0a0a;letter-spacing:0.100px;-webkit-text-stroke:0.55px #0a0a0a;">County</div>
<div class="t" style="left:1388.40px;top:617px;font-size:14.6px;font-weight:400;font-family:'Liberation Sans',sans-serif;color:#404040;letter-spacing:0.033px;-webkit-text-stroke:0.15px #404040;">Andrews</div>
<div class="t" style="left:1554.00px;top:596px;font-size:14.8px;font-weight:400;font-family:'Liberation Sans',sans-serif;color:#0a0a0a;letter-spacing:0.100px;-webkit-text-stroke:0.55px #0a0a0a;">State</div>
<div class="t" style="left:1554.00px;top:617px;font-size:14.6px;font-weight:400;font-family:'Liberation Sans',sans-serif;color:#404040;letter-spacing:0.000px;-webkit-text-stroke:0.15px #404040;">TX</div>
<div class="t" style="left:1388.40px;top:648px;font-size:14.8px;font-weight:400;font-family:'Liberation Sans',sans-serif;color:#0a0a0a;letter-spacing:0.100px;-webkit-text-stroke:0.55px #0a0a0a;">Longitude</div>
<div class="t" style="left:1388.40px;top:669px;font-size:14.6px;font-weight:400;font-family:'Liberation Sans',sans-serif;color:#404040;letter-spacing:-0.450px;-webkit-text-stroke:0.15px #404040;">-101.28</div>
<div class="t" style="left:1554.00px;top:648px;font-size:14.8px;font-weight:400;font-family:'Liberation Sans',sans-serif;color:#0a0a0a;letter-spacing:0.100px;-webkit-text-stroke:0.55px #0a0a0a;">Latitude</div>
<div class="t" style="left:1554.00px;top:669px;font-size:14.6px;font-weight:400;font-family:'Liberation Sans',sans-serif;color:#404040;letter-spacing:-0.537px;-webkit-text-stroke:0.15px #404040;">31.52</div>
<div class="t" style="left:1388.40px;top:713px;font-size:14.8px;font-weight:400;font-family:'Liberation Sans',sans-serif;color:#0a0a0a;letter-spacing:0.100px;-webkit-text-stroke:0.55px #0a0a0a;">Well Data</div>
<div class="a" style="left:1388px;top:738px;width:316px;height:1px;background:#e5e5e5;"></div>
<div class="t" style="left:1388.40px;top:752px;font-size:14.8px;font-weight:400;font-family:'Liberation Sans',sans-serif;color:#0a0a0a;letter-spacing:0.100px;-webkit-text-stroke:0.55px #0a0a0a;">Ground Elevation</div>
<div class="t" style="left:1388.40px;top:774px;font-size:14.6px;font-weight:400;font-family:'Liberation Sans',sans-serif;color:#404040;letter-spacing:0.400px;-webkit-text-stroke:0.15px #404040;">2,490 ft</div>
<div class="t" style="left:1554.00px;top:752px;font-size:14.8px;font-weight:400;font-family:'Liberation Sans',sans-serif;color:#0a0a0a;letter-spacing:0.100px;-webkit-text-stroke:0.55px #0a0a0a;">KB</div>
<div class="t" style="left:1554.00px;top:774px;font-size:14.6px;font-weight:400;font-family:'Liberation Sans',sans-serif;color:#404040;letter-spacing:0.271px;-webkit-text-stroke:0.15px #404040;">2,505 ft</div>
<div class="t" style="left:1388.40px;top:805px;font-size:14.8px;font-weight:400;font-family:'Liberation Sans',sans-serif;color:#0a0a0a;letter-spacing:0.100px;-webkit-text-stroke:0.55px #0a0a0a;">Well Depth (ft)</div>
<div class="t" style="left:1388.40px;top:826px;font-size:14.6px;font-weight:400;font-family:'Liberation Sans',sans-serif;color:#404040;letter-spacing:-0.450px;-webkit-text-stroke:0.15px #404040;">10,760</div>
<div class="t" style="left:1554.00px;top:805px;font-size:14.8px;font-weight:400;font-family:'Liberation Sans',sans-serif;color:#0a0a0a;letter-spacing:0.100px;-webkit-text-stroke:0.55px #0a0a0a;">Well Source</div>
<div class="t" style="left:1554.00px;top:826px;font-size:14.6px;font-weight:400;font-family:'Liberation Sans',sans-serif;color:#404040;letter-spacing:0.000px;-webkit-text-stroke:0.15px #404040;">N/A</div>
<div class="t" style="left:1378.00px;top:895px;font-size:14.6px;font-weight:400;font-family:'Liberation Sans',sans-serif;color:#0a0a0a;letter-spacing:0.008px;-webkit-text-stroke:0.3px #0a0a0a;">Rows per page</div>
<div class="a" style="left:1485px;top:884px;width:64px;height:36px;border:1px solid #e5e5e5;border-radius:5px;box-sizing:border-box;background:#fff;"></div>
<div class="t" style="left:1498.00px;top:895px;font-size:14.6px;font-weight:400;font-family:'Liberation Sans',sans-serif;color:#0a0a0a;letter-spacing:0.000px;-webkit-text-stroke:0.3px #0a0a0a;">10</div>
<svg class="a" style="left:1516px;top:894px;color:#8a8a8a;" width="16" height="16" viewBox="0 0 24 24" fill="none" stroke="currentColor" stroke-width="1.6" stroke-linecap="round" stroke-linejoin="round"><path d="m6 9 6 6 6-6"/></svg>
<div class="a" style="left:1565px;top:884px;width:36px;height:36px;border:1px solid #e5e5e5;border-radius:5px;box-sizing:border-box;background:#fff;"></div>
<svg class="a" style="left:1576px;top:895px;color:#737373;" width="14" height="14" viewBox="0 0 24 24" fill="none" stroke="currentColor" stroke-width="2" stroke-linecap="round" stroke-linejoin="round"><path d="m11 17-5-5 5-5"/><path d="m18 17-5-5 5-5"/></svg>
<div class="a" style="left:1605px;top:884px;width:36px;height:36px;border:1px solid #e5e5e5;border-radius:5px;box-sizing:border-box;background:#fff;"></div>
<svg class="a" style="left:1616px;top:895px;color:#737373;" width="14" height="14" viewBox="0 0 24 24" fill="none" stroke="currentColor" stroke-width="2" stroke-linecap="round" stroke-linejoin="round"><path d="m15 18-6-6 6-6"/></svg>
<div class="a" style="left:1645px;top:884px;width:36px;height:36px;border:1px solid #e5e5e5;border-radius:5px;box-sizing:border-box;background:#fff;"></div>
<svg class="a" style="left:1656px;top:895px;color:#0a0a0a;" width="14" height="14" viewBox="0 0 24 24" fill="none" stroke="currentColor" stroke-width="2" stroke-linecap="round" stroke-linejoin="round"><path d="m9 18 6-6-6-6"/></svg>
<div class="a" style="left:1685px;top:884px;width:36px;height:36px;border:1px solid #e5e5e5;border-radius:5px;box-sizing:border-box;background:#fff;"></div>
<svg class="a" style="left:1696px;top:895px;color:#0a0a0a;" width="14" height="14" viewBox="0 0 24 24" fill="none" stroke="currentColor" stroke-width="2" stroke-linecap="round" stroke-linejoin="round"><path d="m6 17 5-5-5-5"/><path d="m13 17 5-5-5-5"/></svg>
<div class="a" style="left:1697px;top:922px;width:48px;height:48px;background:#fff;border-radius:50%;box-shadow:0 4px 10px rgba(0,0,0,.18);"></div>
<svg class="a" style="left:1711px;top:936px;color:#0a0a0a;" width="20" height="20" viewBox="0 0 24 24" fill="none" stroke="currentColor" stroke-width="2" stroke-linecap="round" stroke-linejoin="round"><circle cx="12" cy="12" r="10"/><path d="M9.09 9a3 3 0 0 1 5.83 1c0 2-3 3-3 3"/><path d="M12 17h.01"/></svg>
<div class="a" style="left:256px;top:920px;width:1508px;height:65px;background:radial-gradient(ellipse 620px 55px at 600px 68px,rgba(0,0,0,0.10),rgba(0,0,0,0) 100%);"></div>
<div class="a" style="left:256px;top:985px;width:1508px;height:8px;background:#eeeeee;border-top:1px solid #dddddd;box-sizing:border-box;"></div></div><div id="ov"></div><div id="modal" style="position:absolute;left:0;top:0;width:1764px;height:993px;will-change:transform"><div class="a" style="left:559px;top:166px;width:651px;height:658px;background:#fff;border-radius:6px;box-shadow:0 0 0 1px rgba(0,0,0,.08),0 4px 6px -1px rgba(0,0,0,.12),0 10px 15px -3px rgba(0,0,0,.12);"></div>
<svg class="a" style="left:1176.6px;top:182.6px;color:#111;" width="16" height="16" viewBox="0 0 24 24" fill="none" stroke="currentColor" stroke-width="1.8" stroke-linecap="round" stroke-linejoin="round"><path d="M18 6 6 18"/><path d="m6 6 12 12"/></svg>
<div class="t" style="left:584.80px;top:196px;font-size:18.4px;font-weight:700;font-family:'Liberation Sans',sans-serif;color:#0a0a0a;letter-spacing:-0.157px;">Import Well Data</div>
<div class="t" style="left:584.80px;top:230px;font-size:14.6px;font-weight:400;font-family:'Liberation Sans',sans-serif;color:#737373;letter-spacing:0.106px;-webkit-text-stroke:0.15px #737373;">Import well data from RodStar (.rsdx, .rsvx) or SRod (.inp6e, .inp7) files</div>
<div class="t" style="left:584.80px;top:276px;font-size:14.6px;font-weight:400;font-family:'Liberation Sans',sans-serif;color:#0a0a0a;letter-spacing:0.023px;-webkit-text-stroke:0.3px #0a0a0a;">Select Files</div>
<svg class="a" style="left:584px;top:295px" width="601" height="112"><rect x="1" y="1" width="599" height="110" rx="6" ry="6" fill="none" stroke="#e2e2e2" stroke-width="2" stroke-dasharray="4 2"/></svg>
<svg class="a" style="left:872.5px;top:313px;color:#124dc2;" width="24" height="24" viewBox="0 0 24 24" fill="none" stroke="currentColor" stroke-width="2" stroke-linecap="round" stroke-linejoin="round"><path d="M21 15v4a2 2 0 0 1-2 2H5a2 2 0 0 1-2-2v-4"/><polyline points="17 8 12 3 7 8"/><line x1="12" x2="12" y1="3" y2="15"/></svg>
<div class="t" style="left:780.50px;top:352px;font-size:14.6px;font-weight:400;font-family:'Liberation Sans',sans-serif;color:#0a0a0a;letter-spacing:0.060px;-webkit-text-stroke:0.3px #0a0a0a;">Click To Upload Or Drag &amp; Drop</div>
<div class="t" style="left:684.40px;top:375px;font-size:12.5px;font-weight:400;font-family:'Liberation Sans',sans-serif;color:#737373;letter-spacing:0.008px;-webkit-text-stroke:0.15px #737373;">Support for .RSDX, .RSVX, .INP6E, .INP7 filetypes. Select multiple files.</div>
<div class="t" style="left:584.90px;top:426px;font-size:14.6px;font-weight:400;font-family:'Liberation Sans',sans-serif;color:#0a0a0a;letter-spacing:0.144px;-webkit-text-stroke:0.3px #0a0a0a;">Files to Import (4)</div>
<div class="a" style="left:584px;top:451px;width:600px;height:280px;border:1px solid #e5e5e5;border-radius:6px;box-sizing:border-box;overflow:hidden;background:#fff">
<div class="a" style="left:0px;top:84px;width:585px;height:1px;background:#e5e5e5;"></div>
<svg class="a" style="left:12px;top:15px" width="32" height="30" viewBox="0 0 32 30"><path d="M10.5 0.7 H21.5 L31.3 8.5 V26.5 A2.8 2.8 0 0 1 28.5 29.3 H11 A2.8 2.8 0 0 1 8.2 26.5 V3 A2.3 2.3 0 0 1 10.5 0.7Z" fill="#fff" stroke="#dde1ea" stroke-width="1.3"/><path d="M21.5 0.7 V6 A2.5 2.5 0 0 0 24 8.5 H31.3" fill="none" stroke="#dde1ea" stroke-width="1.3"/><rect x="0.6" y="13.4" width="25.7" height="11.6" rx="1" fill="#d8261c"/><text x="13.45" y="22.3" text-anchor="middle" font-family="Liberation Sans" font-weight="700" font-size="8.2" fill="#fff" letter-spacing="-0.2">INP6E</text></svg>
<div class="t" style="left:57.00px;top:15px;font-size:14.6px;font-weight:400;font-family:'Liberation Sans',sans-serif;color:#0a0a0a;letter-spacing:0.306px;-webkit-text-stroke:0.3px #0a0a0a;">Anova (003).inp6e</div>
<div class="t" style="left:57.00px;top:36px;font-size:12.5px;font-weight:400;font-family:'Liberation Sans',sans-serif;color:#737373;letter-spacing:-0.150px;-webkit-text-stroke:0.15px #737373;">18.4 KB</div>
<div class="t" style="left:57.00px;top:58px;font-size:12.5px;font-weight:400;font-family:'Liberation Sans',sans-serif;color:#124dc2;letter-spacing:0.118px;-webkit-text-stroke:0.3px #124dc2;">Ready to import</div>
<svg class="a" style="left:549.7px;top:18px;color:#505050;" width="16" height="16" viewBox="0 0 24 24" fill="none" stroke="currentColor" stroke-width="1.7" stroke-linecap="round" stroke-linejoin="round"><path d="M18 6 6 18"/><path d="m6 6 12 12"/></svg>
<div class="a" style="left:0px;top:169px;width:585px;height:1px;background:#e5e5e5;"></div>
<svg class="a" style="left:12px;top:100px" width="32" height="30" viewBox="0 0 32 30"><path d="M10.5 0.7 H21.5 L31.3 8.5 V26.5 A2.8 2.8 0 0 1 28.5 29.3 H11 A2.8 2.8 0 0 1 8.2 26.5 V3 A2.3 2.3 0 0 1 10.5 0.7Z" fill="#fff" stroke="#dde1ea" stroke-width="1.3"/><path d="M21.5 0.7 V6 A2.5 2.5 0 0 0 24 8.5 H31.3" fill="none" stroke="#dde1ea" stroke-width="1.3"/><rect x="0.6" y="13.4" width="25.7" height="11.6" rx="1" fill="#1e55e0"/><text x="13.45" y="22.3" text-anchor="middle" font-family="Liberation Sans" font-weight="700" font-size="8.2" fill="#fff" letter-spacing="-0.2">RSDX</text></svg>
<div class="t" style="left:57.00px;top:100px;font-size:14.6px;font-weight:400;font-family:'Liberation Sans',sans-serif;color:#0a0a0a;letter-spacing:0.009px;-webkit-text-stroke:0.3px #0a0a0a;">ANTARES 23-2H.rsdx</div>
<div class="t" style="left:57.00px;top:121px;font-size:12.5px;font-weight:400;font-family:'Liberation Sans',sans-serif;color:#737373;letter-spacing:-0.150px;-webkit-text-stroke:0.15px #737373;">3817.4 KB</div>
<div class="t" style="left:57.00px;top:143px;font-size:12.5px;font-weight:400;font-family:'Liberation Sans',sans-serif;color:#124dc2;letter-spacing:0.118px;-webkit-text-stroke:0.3px #124dc2;">Ready to import</div>
<svg class="a" style="left:549.7px;top:103px;color:#505050;" width="16" height="16" viewBox="0 0 24 24" fill="none" stroke="currentColor" stroke-width="1.7" stroke-linecap="round" stroke-linejoin="round"><path d="M18 6 6 18"/><path d="m6 6 12 12"/></svg>
<div class="a" style="left:0px;top:254px;width:585px;height:1px;background:#e5e5e5;"></div>
<svg class="a" style="left:12px;top:185px" width="32" height="30" viewBox="0 0 32 30"><path d="M10.5 0.7 H21.5 L31.3 8.5 V26.5 A2.8 2.8 0 0 1 28.5 29.3 H11 A2.8 2.8 0 0 1 8.2 26.5 V3 A2.3 2.3 0 0 1 10.5 0.7Z" fill="#fff" stroke="#dde1ea" stroke-width="1.3"/><path d="M21.5 0.7 V6 A2.5 2.5 0 0 0 24 8.5 H31.3" fill="none" stroke="#dde1ea" stroke-width="1.3"/><rect x="0.6" y="13.4" width="25.7" height="11.6" rx="1" fill="#1e55e0"/><text x="13.45" y="22.3" text-anchor="middle" font-family="Liberation Sans" font-weight="700" font-size="8.2" fill="#fff" letter-spacing="-0.2">RSDX</text></svg>
<div class="t" style="left:57.00px;top:185px;font-size:14.6px;font-weight:400;font-family:'Liberation Sans',sans-serif;color:#0a0a0a;letter-spacing:0.010px;-webkit-text-stroke:0.3px #0a0a0a;">AQUILA 22-1.rsdx</div>
<div class="t" style="left:57.00px;top:206px;font-size:12.5px;font-weight:400;font-family:'Liberation Sans',sans-serif;color:#737373;letter-spacing:-0.150px;-webkit-text-stroke:0.15px #737373;">1856.8 KB</div>
<div class="t" style="left:57.00px;top:228px;font-size:12.5px;font-weight:400;font-family:'Liberation Sans',sans-serif;color:#124dc2;letter-spacing:0.118px;-webkit-text-stroke:0.3px #124dc2;">Ready to import</div>
<svg class="a" style="left:549.7px;top:188px;color:#505050;" width="16" height="16" viewBox="0 0 24 24" fill="none" stroke="currentColor" stroke-width="1.7" stroke-linecap="round" stroke-linejoin="round"><path d="M18 6 6 18"/><path d="m6 6 12 12"/></svg>
<div class="a" style="left:0px;top:339px;width:585px;height:1px;background:#e5e5e5;"></div>
<svg class="a" style="left:12px;top:270px" width="32" height="30" viewBox="0 0 32 30"><path d="M10.5 0.7 H21.5 L31.3 8.5 V26.5 A2.8 2.8 0 0 1 28.5 29.3 H11 A2.8 2.8 0 0 1 8.2 26.5 V3 A2.3 2.3 0 0 1 10.5 0.7Z" fill="#fff" stroke="#dde1ea" stroke-width="1.3"/><path d="M21.5 0.7 V6 A2.5 2.5 0 0 0 24 8.5 H31.3" fill="none" stroke="#dde1ea" stroke-width="1.3"/><rect x="0.6" y="13.4" width="25.7" height="11.6" rx="1" fill="#1e55e0"/><text x="13.45" y="22.3" text-anchor="middle" font-family="Liberation Sans" font-weight="700" font-size="8.2" fill="#fff" letter-spacing="-0.2">RSDX</text></svg>
<div class="t" style="left:57.00px;top:270px;font-size:14.6px;font-weight:400;font-family:'Liberation Sans',sans-serif;color:#0a0a0a;letter-spacing:0.308px;-webkit-text-stroke:0.3px #0a0a0a;">arm-37 - copy sr &amp; rfx.rsdx</div>
<div class="t" style="left:57.00px;top:291px;font-size:12.5px;font-weight:400;font-family:'Liberation Sans',sans-serif;color:#737373;letter-spacing:-0.150px;-webkit-text-stroke:0.15px #737373;">2101.3 KB</div>
<div class="t" style="left:57.00px;top:313px;font-size:12.5px;font-weight:400;font-family:'Liberation Sans',sans-serif;color:#124dc2;letter-spacing:0.118px;-webkit-text-stroke:0.3px #124dc2;">Ready to import</div>
<svg class="a" style="left:549.7px;top:273px;color:#505050;" width="16" height="16" viewBox="0 0 24 24" fill="none" stroke="currentColor" stroke-width="1.7" stroke-linecap="round" stroke-linejoin="round"><path d="M18 6 6 18"/><path d="m6 6 12 12"/></svg>
<div class="a" style="left:584px;top:0px;width:14px;height:278px;background:#fafafa;border-left:1px solid #ececec;box-sizing:border-box;"></div>
<div class="a" style="left:588px;top:3px;width:7px;height:222px;background:#c1c1c1;border-radius:4px;"></div>
</div>
<div class="a" style="left:973px;top:763px;width:80px;height:36px;border:1px solid #e5e5e5;border-radius:6px;box-sizing:border-box;background:#fff;box-shadow:0 1px 2px rgba(0,0,0,.05);"></div>
<div class="t" style="left:990.20px;top:774px;font-size:14.6px;font-weight:400;font-family:'Liberation Sans',sans-serif;color:#0a0a0a;letter-spacing:-0.030px;-webkit-text-stroke:0.3px #0a0a0a;">Cancel</div>
<div class="a" style="left:1061px;top:763px;width:123px;height:36px;background:#124dc2;border-radius:6px;"></div>
<div class="t" style="left:1077.50px;top:774px;font-size:14.8px;font-weight:400;font-family:'Liberation Sans',sans-serif;color:#fff;letter-spacing:0.065px;-webkit-text-stroke:0.55px #fff;">Import 4 Files</div></div></body></html>
